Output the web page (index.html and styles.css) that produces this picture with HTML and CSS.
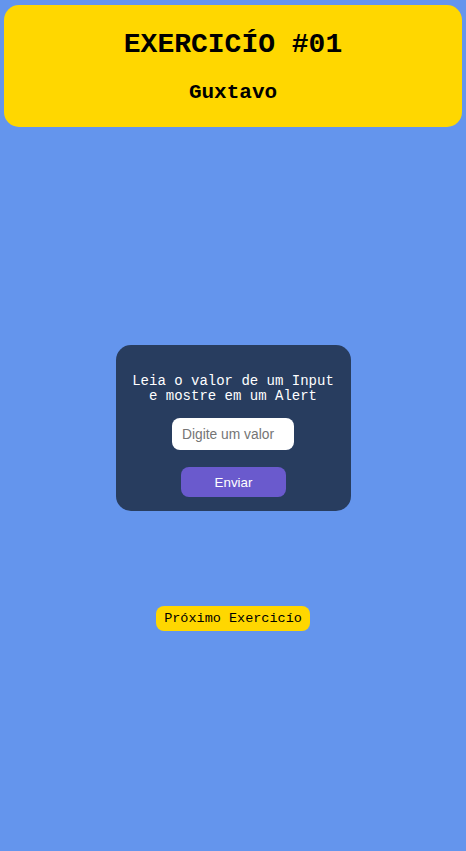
FILE: index.html
```html
<!DOCTYPE html>
<html lang="pt-BR">
<head>
<meta charset="UTF-8">
<title>Exercício #01</title>
<link rel="stylesheet" href="styles.css">
</head>
<body>
<header class="header">
  <h1 class="title">EXERCICÍO #01</h1>
  <h2 class="author">Guxtavo</h2>
</header>
<main class="main">
  <section class="card">
    <p class="card-text">Leia o valor de um Input<br>e mostre em um Alert</p>
    <input class="card-input" type="text" placeholder="Digite um valor">
    <button class="card-button" type="button">Enviar</button>
  </section>
  <a class="next" href="#">Próximo Exercicío</a>
</main>
</body>
</html>
```
FILE: styles.css
```css
html, body {
  margin: 0;
  padding: 0;
}
body {
  background: #6495ED;
  font-family: "Liberation Mono", "Courier New", monospace;
  min-height: 851px;
}
.header {
  margin: 5px 4px 0 4px;
  height: 122px;
  background: #FFD700;
  border-radius: 15px;
  display: flex;
  flex-direction: column;
  align-items: center;
  box-sizing: border-box;
  padding-top: 23px;
}
.title {
  margin: 0;
  font-size: 28px;
  line-height: 34px;
  font-weight: bold;
  color: #000;
}
.author {
  margin: 18px 0 0 0;
  font-size: 21px;
  line-height: 26px;
  font-weight: bold;
  color: #000;
}
.main {
  display: flex;
  flex-direction: column;
  align-items: center;
  padding-top: 218px;
}
.card {
  width: 235px;
  height: 166px;
  box-sizing: border-box;
  background: #283D5F;
  border-radius: 15px;
  display: flex;
  flex-direction: column;
  align-items: center;
  padding-top: 29px;
}
.card-text {
  margin: 0;
  color: #fff;
  font-size: 14px;
  line-height: 15px;
  text-align: center;
}
.card-input {
  margin-top: 14px;
  width: 122px;
  height: 32px;
  box-sizing: border-box;
  border: none;
  border-radius: 8px;
  background: #fff;
  padding: 0 10px;
  font-family: "Liberation Sans", Arial, sans-serif;
  font-size: 13.8px;
  outline: none;
}
.card-input::placeholder {
  color: #757575;
}
.card-button {
  margin-top: 17px;
  margin-left: 1px;
  width: 105px;
  height: 30px;
  border: none;
  border-radius: 8px;
  background: #6A5ACD;
  color: #fff;
  font-family: "Liberation Sans", Arial, sans-serif;
  font-size: 13.333px;
  padding: 0;
}
.next {
  margin-top: 95px;
  display: block;
  width: 154px;
  height: 25px;
  box-sizing: border-box;
  background: #FFD700;
  border-radius: 8px;
  color: #000;
  text-decoration: none;
  font-size: 13.5px;
  line-height: 25px;
  text-align: center;
}
```
